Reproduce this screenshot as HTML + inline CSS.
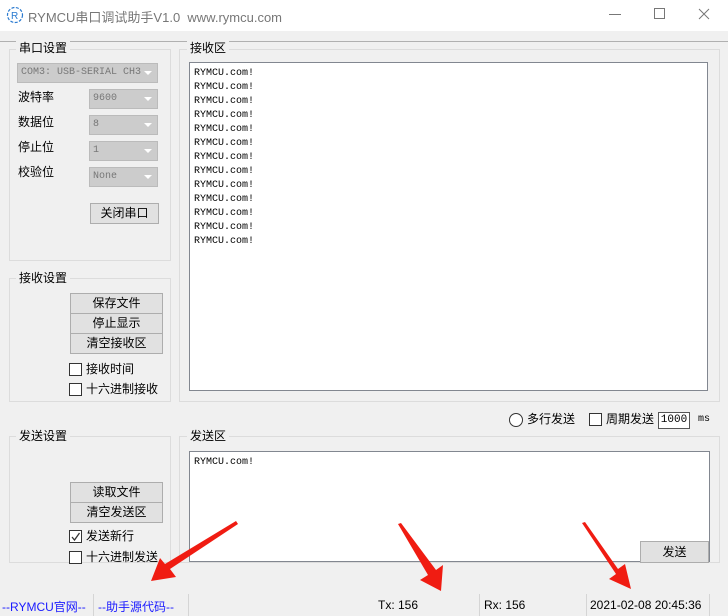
<!DOCTYPE html>
<html><head><meta charset="utf-8"><style>
body{margin:0;width:728px;height:616px;background:#f0f0f0;position:relative;overflow:hidden;font-family:"Liberation Sans","Noto Sans CJK SC",sans-serif;font-size:12px;color:#000}
.a{position:absolute}
.grp{position:absolute;border:1px solid #dcdcdc}
.gt{position:absolute;background:#f0f0f0;padding:0 3px;font-size:12px;line-height:15px}
.ta{position:absolute;background:#fff;border:1px solid #828790}
.mono{font-family:"Liberation Mono","Noto Sans CJK SC",monospace;font-size:10px;line-height:14px}
.btn{position:absolute;background:#e1e1e1;border:1px solid #adadad;text-align:center;font-size:12px;box-sizing:border-box}
.cb{position:absolute;width:11px;height:11px;border:1px solid #333;background:#fff}
.lb{position:absolute;font-size:12px;line-height:15px}
.sel{position:absolute;background:#ccc;border:1px solid #bbb;box-sizing:border-box;color:#777;font-size:10px;padding-left:3px;font-family:"Liberation Mono",monospace}
.sel:after{content:"";position:absolute;right:5px;top:7px;border-left:4px solid transparent;border-right:4px solid transparent;border-top:4px solid #fff}
.sep{position:absolute;top:594px;width:1px;height:22px;background:#d5d5d5}
.st{position:absolute;top:598px;font-size:12px}
</style></head><body>
<div class="a" style="left:0;top:0;width:728px;height:31px;background:#fff"></div>
<svg class="a" style="left:6px;top:6px" width="18" height="18"><circle cx="9" cy="9" r="7.5" fill="none" stroke="#2a7ad0" stroke-width="1.2" stroke-dasharray="3 1.5"/><text x="5" y="13" font-size="10" fill="#2a7ad0" font-family="Liberation Sans">R</text></svg>
<div class="a" style="left:28px;top:7px;font-size:13px;color:#777">RYMCU串口调试助手V1.0&nbsp;&nbsp;www.rymcu.com</div>
<div class="a" style="left:609px;top:14px;width:12px;height:1px;background:#777"></div>
<div class="a" style="left:654px;top:8px;width:9px;height:9px;border:1px solid #777"></div>
<svg class="a" style="left:698px;top:8px" width="12" height="12"><path d="M1 1L11 11M11 1L1 11" stroke="#777" stroke-width="1"/></svg>
<div class="a" style="left:0;top:41px;width:728px;height:1px;background:#b0b0b0"></div>

<div class="grp" style="left:9px;top:49px;width:160px;height:210px"></div>
<div class="gt" style="left:16px;top:41px">串口设置</div>
<div class="sel" style="left:17px;top:63px;width:141px;height:20px;line-height:18px">COM3: USB-SERIAL CH3</div>
<div class="lb" style="left:18px;top:90px">波特率</div>
<div class="sel" style="left:89px;top:89px;width:69px;height:20px;line-height:18px">9600</div>
<div class="lb" style="left:18px;top:115px">数据位</div>
<div class="sel" style="left:89px;top:115px;width:69px;height:20px;line-height:18px">8</div>
<div class="lb" style="left:18px;top:140px">停止位</div>
<div class="sel" style="left:89px;top:141px;width:69px;height:20px;line-height:18px">1</div>
<div class="lb" style="left:18px;top:165px">校验位</div>
<div class="sel" style="left:89px;top:167px;width:69px;height:20px;line-height:18px">None</div>
<div class="btn" style="left:90px;top:203px;width:69px;height:21px;line-height:19px">关闭串口</div>

<div class="grp" style="left:179px;top:49px;width:539px;height:351px"></div>
<div class="gt" style="left:187px;top:41px">接收区</div>
<div class="ta mono" style="left:189px;top:62px;width:519px;height:329px;padding:4px 0 0 4px;box-sizing:border-box">RYMCU.com!<br>RYMCU.com!<br>RYMCU.com!<br>RYMCU.com!<br>RYMCU.com!<br>RYMCU.com!<br>RYMCU.com!<br>RYMCU.com!<br>RYMCU.com!<br>RYMCU.com!<br>RYMCU.com!<br>RYMCU.com!<br>RYMCU.com!</div>

<div class="grp" style="left:9px;top:278px;width:160px;height:122px"></div>
<div class="gt" style="left:16px;top:271px">接收设置</div>
<div class="btn" style="left:70px;top:293px;width:93px;height:21px;line-height:19px">保存文件</div>
<div class="btn" style="left:70px;top:313px;width:93px;height:21px;line-height:19px">停止显示</div>
<div class="btn" style="left:70px;top:333px;width:93px;height:21px;line-height:19px">清空接收区</div>
<div class="cb" style="left:69px;top:363px"></div><div class="lb" style="left:86px;top:362px">接收时间</div>
<div class="cb" style="left:69px;top:383px"></div><div class="lb" style="left:86px;top:382px">十六进制接收</div>

<div class="a" style="left:509px;top:413px;width:12px;height:12px;border:1px solid #333;border-radius:50%;background:#fff"></div>
<div class="lb" style="left:527px;top:412px">多行发送</div>
<div class="cb" style="left:589px;top:413px"></div>
<div class="lb" style="left:606px;top:412px">周期发送</div>
<div class="a mono" style="left:658px;top:412px;width:30px;height:15px;border:1px solid #555;background:#fff;line-height:15px;text-align:center;font-size:11px">1000</div>
<div class="a" style="left:698px;top:414px;font-size:10px;font-family:'Liberation Mono',monospace">ms</div>

<div class="grp" style="left:9px;top:436px;width:160px;height:125px"></div>
<div class="gt" style="left:16px;top:429px">发送设置</div>
<div class="btn" style="left:70px;top:482px;width:93px;height:21px;line-height:19px">读取文件</div>
<div class="btn" style="left:70px;top:502px;width:93px;height:21px;line-height:19px">清空发送区</div>
<div class="cb" style="left:69px;top:530px"></div><svg class="a" style="left:70px;top:531px" width="11" height="11"><path d="M2 6L4.5 9L9.5 2" stroke="#333" fill="none" stroke-width="1.3"/></svg><div class="lb" style="left:86px;top:529px">发送新行</div>
<div class="cb" style="left:69px;top:551px"></div><div class="lb" style="left:86px;top:550px">十六进制发送</div>

<div class="grp" style="left:179px;top:436px;width:539px;height:125px"></div>
<div class="gt" style="left:187px;top:429px">发送区</div>
<div class="ta mono" style="left:189px;top:451px;width:521px;height:111px;padding:4px 0 0 4px;box-sizing:border-box">RYMCU.com!</div>
<div class="btn" style="left:640px;top:541px;width:69px;height:22px;line-height:20px">发送</div>

<div class="sep" style="left:93px"></div><div class="sep" style="left:188px"></div><div class="sep" style="left:479px"></div><div class="sep" style="left:586px"></div><div class="sep" style="left:709px"></div>
<div class="st" style="left:2px;color:#1a1aff">--RYMCU官网--</div>
<div class="st" style="left:98px;color:#1a1aff">--助手源代码--</div>
<div class="st" style="left:378px">Tx: 156</div>
<div class="st" style="left:484px">Rx: 156</div>
<div class="st" style="left:590px">2021-02-08 20:45:36</div>

<svg class="a" style="left:0;top:0" width="728" height="616">
<g fill="#f01c12">
<path d="M236 521L238 524L170 569L176 577L151 581L160 558L165 564Z"/>
<path d="M398 524L401 523L436 570L443 565L441 591L420 580L428 575Z"/>
<path d="M582 523L585 522L618 569L625 564L631 589L609 579L616 574Z"/>
</g></svg>
</body></html>
